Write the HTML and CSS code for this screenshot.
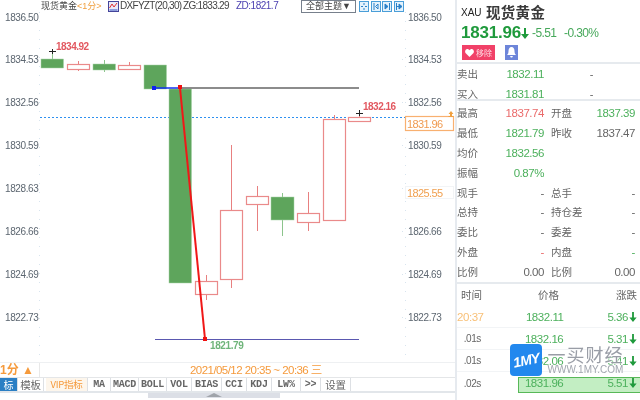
FILE: index.html
```html
<!DOCTYPE html>
<html lang="zh">
<head>
<meta charset="utf-8">
<title>现货黄金</title>
<link rel="stylesheet" href="styles.css">
</head>
<body>
<div class="app">
  <div class="main">
    <div class="topbar">
      <span class="t-name">现货黄金</span>
      <span class="t-period">&lt;1分&gt;</span>
      <svg class="t-icon" width="11" height="11" viewBox="0 0 11 11"><rect x=".5" y=".5" width="10" height="10" fill="#e8e8f8" stroke="#44449a"/><path d="M1.5 7l2.5-4 2 3 3-4" fill="none" stroke="#e03030"/><path d="M1.5 9h8" stroke="#3050c0"/></svg>
      <span class="t-formula">DXFYZT(20,30)</span>
      <span class="t-zg">ZG:1833.29</span>
      <span class="t-zd">ZD:1821.7</span>
      <span class="t-theme">全部主题▼</span>
      <span class="t-tools">
        <svg width="10" height="11" viewBox="0 0 10 11"><rect x=".5" y=".5" width="9" height="10" fill="#e4f2fc" stroke="#4a9ed8"/><path d="M5 2v2M5 7v2M2 5.500h2M6 5.500h2" stroke="#2a80c8"/></svg>
        <svg width="10" height="11" viewBox="0 0 10 11"><rect x=".5" y=".5" width="9" height="10" fill="#e4f2fc" stroke="#4a9ed8"/><path d="M3 2v7M7 3L4.500 5.500 7 8z" fill="none" stroke="#2a80c8"/></svg>
        <svg width="10" height="11" viewBox="0 0 10 11"><rect x=".5" y=".5" width="9" height="10" fill="#e4f2fc" stroke="#4a9ed8"/><path d="M3 3l3 2.500-3 2.500zM7.500 2v7" fill="#2a80c8" stroke="#2a80c8"/></svg>
        <svg width="10" height="11" viewBox="0 0 10 11"><rect x=".5" y=".5" width="9" height="10" fill="#e4f2fc" stroke="#4a9ed8"/><path d="M2 5.500h3M5 3l3 2.500-3 2.500zM2.500 2v7" fill="#2a80c8" stroke="#2a80c8"/></svg>
      </span>
    </div>
    <svg class="chart" width="455" height="350" viewBox="0 12 455 350">
      <g class="grid">
        <path d="M39.500 12V362M405.500 12V362"/>
        <path d="M36 59.500h4M36 102.500h4M36 145.500h4M36 188.500h4M36 231.500h4M36 274.500h4M36 317.500h4M402 59.500h4M402 102.500h4M402 145.500h4M402 188.500h4M402 231.500h4M402 274.500h4M402 317.500h4"/>
      </g>
      <g class="axis">
        <text x="5" y="21">1836.50</text><text x="5" y="63">1834.53</text><text x="5" y="106">1832.56</text><text x="5" y="149">1830.59</text><text x="5" y="192">1828.63</text><text x="5" y="235">1826.66</text><text x="5" y="278">1824.69</text><text x="5" y="321">1822.73</text>
        <text x="408" y="21">1836.50</text><text x="408" y="63">1834.53</text><text x="408" y="106">1832.56</text><text x="408" y="149">1830.59</text><text x="408" y="235">1826.66</text><text x="408" y="278">1824.69</text><text x="408" y="321">1822.73</text>
      </g>
      <path class="last-line" d="M40 117.500H405"/>
      <g class="up">
        <path d="M78.500 61v3M78.500 69v2M129.500 62v3M206.500 275v6M206.500 294v6M231.500 145v65M231.500 279v9M257.500 186v10M257.500 204v27M308.500 192v21M308.500 222v9M334.500 115v4M359.500 113v4"/>
        <rect x="67.500" y="64.500" width="22" height="5"/>
        <rect x="118.500" y="65.500" width="22" height="4"/>
        <rect x="195.500" y="281.500" width="22" height="13"/>
        <rect x="220.500" y="210.500" width="22" height="69"/>
        <rect x="246.500" y="196.500" width="22" height="8"/>
        <rect x="297.500" y="213.500" width="22" height="9"/>
        <rect x="323.500" y="119.500" width="22" height="101"/>
        <rect x="348.500" y="117.500" width="22" height="4"/>
      </g>
      <g class="down">
        <path d="M52.500 51v8M104.500 60v4M104.500 70v2M282.500 193v4M282.500 220v16"/>
        <rect x="41" y="59" width="22.500" height="9"/>
        <rect x="93" y="64" width="22.500" height="6"/>
        <rect x="144" y="65" width="22.500" height="24"/>
        <rect x="169" y="89" width="22.500" height="194"/>
        <rect x="271" y="197" width="23" height="23"/>
      </g>
      <path class="cross" d="M49 51.500h7M52.500 49v5M356 113.500h7M359.500 110v6"/>
      <path class="black-line" d="M180 88H359"/>
      <path class="blue-line" d="M154 88H180"/>
      <path class="bottom-line" d="M155 339.500H359"/>
      <path class="red-line" d="M180 88L205 339"/>
      <rect class="blue-dot" x="152" y="86" width="4" height="4"/>
      <rect class="red-dot" x="178" y="85" width="4" height="4"/>
      <rect class="red-dot" x="203" y="337" width="4" height="4"/>
      <text class="hi-label" x="56" y="50">1834.92</text>
      <text class="hi-label" x="363" y="110">1832.16</text>
      <text class="lo-label" x="210" y="349">1821.79</text>
      <rect class="price-box" x="405.500" y="116.500" width="48" height="14"/>
      <text class="price-text" x="407" y="128">1831.96</text>
      <path class="marker" d="M451 111l2.500 3h-1.500v2h1.500v1h-5v-1h1.500v-2h-1.500z"/>
      <rect class="cursor-box" x="405.500" y="186.500" width="48" height="12"/>
      <text class="cursor-text" x="407" y="197">1825.55</text>
    </svg>
    <div class="datebar">
      <span class="period">1分 ▲</span>
      <span class="datetext">2021/05/12 20:35 ~ 20:36 三</span>
    </div>
    <div class="tabs">
      <span class="tab tab-active">标</span>
      <span class="tab tab-cn tab-w26">模板</span>
      <span class="tab tab-vip">VIP指标</span>
      <span class="tab tab-w23">MA</span>
      <span class="tab tab-w28">MACD</span>
      <span class="tab tab-w28">BOLL</span>
      <span class="tab tab-w25">VOL</span>
      <span class="tab tab-w30">BIAS</span>
      <span class="tab tab-w25">CCI</span>
      <span class="tab tab-w25">KDJ</span>
      <span class="tab tab-w29">LW%</span>
      <span class="tab tab-w20">&gt;&gt;</span>
      <span class="tab tab-cn tab-w30">设置</span>
    </div>
    <div class="scroll"><span class="scroll-thumb"><span class="scroll-arrow"></span></span></div>
  </div>

  <aside class="side">
    <div class="quote">
      <div class="q-title"><span class="q-code">XAU</span><span class="q-name">现货黄金</span></div>
      <div class="q-price">
        <span class="q-last">1831.96</span>
        <svg class="q-arrow" width="8" height="11" viewBox="0 0 8 11"><path d="M3 0h2v6h3L4 11 0 6h3z"/></svg>
        <span class="q-chg">-5.51</span>
        <span class="q-pct">-0.30%</span>
      </div>
      <div class="q-actions">
        <span class="btn-remove"><svg width="9" height="8" viewBox="0 0 9 8"><path d="M4.500 8L.5 4C-.5 2.500.5 0 2.300 0c1 0 1.700.6 2.200 1.300C5 .6 5.700 0 6.700 0 8.500 0 9.500 2.500 8.500 4z" fill="#fff"/></svg>移除</span>
        <span class="btn-bell"><svg width="9" height="11" viewBox="0 0 9 11"><path d="M4.500 0C6.500 0 7.500 2 7.500 4c0 2 .5 3 1.500 4H0c1-1 1.500-2 1.500-4 0-2 1-4 3-4zM3.200 9h2.600c0 1-.6 1.500-1.300 1.500S3.200 10 3.200 9z" fill="#fff"/></svg></span>
      </div>
    </div>
    <div class="block block-top">
      <div class="row"><span class="lbl">卖出</span><span class="val green">1832.11</span><span class="dash">-</span></div>
      <div class="row"><span class="lbl">买入</span><span class="val green">1831.81</span><span class="dash">-</span></div>
    </div>
    <div class="block">
      <div class="row"><span class="lbl">最高</span><span class="val red">1837.74</span><span class="lbl lbl2">开盘</span><span class="val2 green">1837.39</span></div>
      <div class="row"><span class="lbl">最低</span><span class="val green">1821.79</span><span class="lbl lbl2">昨收</span><span class="val2">1837.47</span></div>
      <div class="row"><span class="lbl">均价</span><span class="val green">1832.56</span></div>
      <div class="row"><span class="lbl">振幅</span><span class="val green">0.87%</span></div>
      <div class="row"><span class="lbl">现手</span><span class="val">-</span><span class="lbl lbl2">总手</span><span class="val2">-</span></div>
      <div class="row"><span class="lbl">总持</span><span class="val">-</span><span class="lbl lbl2">持仓差</span><span class="val2">-</span></div>
      <div class="row"><span class="lbl">委比</span><span class="val">-</span><span class="lbl lbl2">委差</span><span class="val2">-</span></div>
      <div class="row"><span class="lbl">外盘</span><span class="val red">-</span><span class="lbl lbl2">内盘</span><span class="val2 green">-</span></div>
      <div class="row"><span class="lbl">比例</span><span class="val">0.00</span><span class="lbl lbl2">比例</span><span class="val2">0.00</span></div>
    </div>
    <div class="ticks">
      <div class="tick tick-head"><span class="c-time">时间</span><span class="c-price">价格</span><span class="c-chg">涨跌</span></div>
      <div class="tick"><span class="c-time orange">20:37</span><span class="c-price green">1832.11</span><span class="c-chg green">5.36<svg class="arrow" width="8" height="10" viewBox="0 0 8 11"><path d="M3 0h2v6h3L4 11 0 6h3z"/></svg></span></div>
      <div class="tick"><span class="c-time small">.01s</span><span class="c-price green">1832.16</span><span class="c-chg green">5.31<svg class="arrow" width="8" height="10" viewBox="0 0 8 11"><path d="M3 0h2v6h3L4 11 0 6h3z"/></svg></span></div>
      <div class="tick"><span class="c-time small">.01s</span><span class="c-price green">1832.06</span><span class="c-chg green">5.41<svg class="arrow" width="8" height="10" viewBox="0 0 8 11"><path d="M3 0h2v6h3L4 11 0 6h3z"/></svg></span></div>
      <div class="tick tick-last"><span class="c-time small">.02s</span><span class="c-price green">1831.96</span><span class="c-chg green">5.51<svg class="arrow" width="8" height="10" viewBox="0 0 8 11"><path d="M3 0h2v6h3L4 11 0 6h3z"/></svg></span></div>
    </div>
  </aside>

  <div class="watermark">
    <div class="wm-logo"><span class="wm-1my">1MY</span></div>
    <div class="wm-text">
      <span class="wm-cn">一买财经</span>
      <span class="wm-url">WWW.1MY.COM</span>
    </div>
  </div>
</div>
</body>
</html>
```

FILE: styles.css
```css
* { box-sizing: border-box; }
html, body { margin: 0; padding: 0; background: #fff; }
body { width: 640px; height: 400px; overflow: hidden; font-family: "Liberation Sans", "Noto Sans CJK SC", sans-serif; color: #555; }
.app { position: relative; display: flex; width: 640px; height: 400px; filter: blur(.35px); }

/* main column */
.main { width: 457px; flex: none; border-right: 2px solid #e6eaef; }
.topbar { display: flex; align-items: center; height: 12px; font-size: 10px; line-height: 12px; color: #444; white-space: nowrap; letter-spacing: -.7px; }
.t-name { margin-left: 41px; width: 36px; font-size: 9px; letter-spacing: 0; }
.t-period { width: 31px; color: #f0a040; font-size: 9px; letter-spacing: 0; }
.t-icon { flex: none; margin-right: 1px; }
.t-formula { width: 63px; }
.t-zg { width: 53px; }
.t-zd { width: 65px; color: #4a3fb0; letter-spacing: -.5px; }
.t-theme { width: 55px; height: 13px; border: 1px solid #77808c; text-align: center; font-size: 9px; line-height: 11px; letter-spacing: 0; }
.t-tools { display: flex; gap: 1.500px; margin-left: 3px; }
.chart { display: block; }
.grid path { fill: none; stroke: #d8e4ee; stroke-width: 1; stroke-dasharray: 1 8; }
.axis text { font-size: 10px; letter-spacing: -.4px; fill: #5c6670; }
.last-line { stroke: #2e90f0; stroke-width: 1.200; stroke-dasharray: 2 2; fill: none; }
.up path { stroke: #e88080; fill: none; }
.up rect { fill: #fff; stroke: #ea8a8a; stroke-width: 1.200; }
.down path { stroke: #8cc48c; fill: none; }
.down rect { fill: #5ea55c; stroke: #a8d4a8; stroke-width: .5; }
.cross { stroke: #222; fill: none; }
.black-line { stroke: #666; stroke-width: 1.500; }
.blue-line { stroke: #1030f0; stroke-width: 1.500; }
.bottom-line { stroke: #5a58b0; stroke-width: 1; }
.red-line { stroke: #f01818; stroke-width: 2; fill: none; }
.blue-dot { fill: #1020f0; }
.red-dot { fill: #f01010; }
.hi-label { font-size: 10px; font-weight: 700; letter-spacing: -.5px; fill: #e25860; }
.lo-label { font-size: 10px; font-weight: 700; letter-spacing: -.4px; fill: #6fb47a; }
.price-box { fill: #fff; stroke: #f8b070; stroke-width: 1.200; }
.price-text { font-size: 11px; letter-spacing: -.6px; fill: #f09a50; }
.marker { fill: #f0a040; }
.cursor-box { fill: #fff; stroke: #f2f4f6; }
.cursor-text { font-size: 11px; letter-spacing: -.6px; fill: #f0a050; }

/* date bar and tabs */
.datebar { display: flex; align-items: center; height: 16px; border-top: 1px solid #eef0f2; border-bottom: 1px solid #e4e6e8; font-size: 11.500px; color: #f59a3c; }
.period { width: 40px; height: 100%; border-right: 1px solid #e8e8e8; font-size: 12px; font-weight: 700; line-height: 15px; white-space: nowrap; }
.datetext { margin: 0 0 3px 150px; letter-spacing: -.55px; white-space: nowrap; }
.tabs { display: flex; height: 15px; border-bottom: 2px solid #e2e6ea; background: #fff; font-family: "Liberation Mono", monospace; font-size: 10px; font-weight: 700; line-height: 13px; color: #666; }
.tab { display: block; border-right: 1px solid #dde0e4; text-align: center; white-space: nowrap; letter-spacing: -.2px; }
.tab-active { width: 18px; background: #2b7fc4; color: #fff; font-family: "Noto Sans CJK SC", sans-serif; font-size: 10px; font-weight: 400; }
.tab-cn { font-family: "Noto Sans CJK SC", sans-serif; font-size: 10.500px; font-weight: 400; }
.tab-vip { width: 42px; margin-left: 2px; background: #fdf6ec; color: #f59a3c; font-family: "Noto Sans CJK SC", sans-serif; font-size: 9.500px; font-weight: 400; letter-spacing: -.3px; }
.tab-w20 { width: 20px; }
.tab-w23 { width: 23px; }
.tab-w25 { width: 25px; }
.tab-w26 { width: 26px; }
.tab-w28 { width: 28px; }
.tab-w29 { width: 29px; }
.tab-w30 { width: 30px; }
.scroll { height: 5px; padding-left: 148px; background: #fff; }
.scroll-thumb { display: flex; justify-content: center; width: 132px; height: 5px; background: #dcdfe6; }
.scroll-arrow { width: 0; height: 0; border: solid transparent; border-width: 0 8px 4px; border-bottom-color: #a0a4aa; }

/* sidebar */
.side { width: 183px; flex: none; font-size: 11px; color: #666; }
.quote { height: 64px; border-bottom: 2px solid #e6eaee; padding-left: 4px; }
.q-title { display: flex; align-items: center; height: 23px; padding-top: 1px; }
.q-code { width: 25px; font-size: 10px; color: #222; }
.q-name { font-family: "Noto Sans CJK SC", sans-serif; font-size: 14.500px; font-weight: 700; line-height: 20px; color: #3a3a3a; letter-spacing: .3px; }
.q-price { display: flex; align-items: center; height: 20px; color: #1f9a3c; }
.q-last { width: 60px; font-size: 17px; font-weight: 700; letter-spacing: -.2px; }
.q-arrow { fill: #1f9a3c; margin-right: 3px; }
.q-chg { width: 32px; font-size: 12px; letter-spacing: -.6px; color: #46a85a; }
.q-pct { font-size: 12px; letter-spacing: -.6px; color: #46a85a; }
.q-actions { display: flex; gap: 10px; margin: 2px 0 0 1px; }
.btn-remove { display: flex; align-items: center; justify-content: center; gap: 2px; width: 33px; height: 15px; background: #f14168; color: #ffd9e2; font-size: 8px; }
.btn-bell { display: flex; align-items: center; justify-content: center; width: 13px; height: 15px; background: #6d85d9; }
.block { display: flex; flex-direction: column; gap: 5.900px; padding-top: 5px; }
.block-top { height: 37px; padding-top: 3px; border-bottom: 2px solid #e6eaee; }
.row { display: flex; height: 14px; line-height: 14px; letter-spacing: -.45px; }
.lbl { width: 29px; color: #666; font-size: 10.500px; letter-spacing: 0; white-space: nowrap; }
.lbl2 { width: 38px; margin-left: 7px; }
.val { width: 58px; text-align: right; font-size: 11.500px; }
.val2 { flex: 1; padding-right: 5px; text-align: right; font-size: 11.500px; }
.dash { width: 49px; text-align: right; }
.green { color: #4cb05c; }
.red { color: #ea6a6a; }
.orange { color: #f8c078; }

/* tick table */
.ticks { margin-top: 3px; border-top: 2px solid #e6eaee; }
.tick { position: relative; display: flex; align-items: center; height: 22px; font-size: 11.500px; letter-spacing: -.45px; border-bottom: 1px solid #f2f4f6; }
.tick-head { height: 20px; font-size: 10.500px; letter-spacing: 0; color: #666; border-bottom: 0; }
.tick-head + .tick { height: 24px; padding-top: 3px; }
.tick-last { border-bottom: 0; }
.tick-last::before { content: ""; position: absolute; left: 61px; right: 0; top: 5px; height: 14px; background: #c3eec3; border: 1px solid #58b858; border-right: 0; }
.c-time { position: relative; width: 25px; text-align: right; }
.c-time.small { font-size: 10px; color: #666; }
.c-price { position: relative; width: 133px; text-align: center; white-space: nowrap; }
.tick-head .c-price { color: #666; }
.c-chg { position: relative; flex: 1; padding-right: 3px; text-align: right; white-space: nowrap; }
.arrow { margin-left: 1px; fill: #1f9a3c; vertical-align: -1px; }

/* watermark */
.watermark { position: absolute; left: 510px; top: 344px; display: flex; gap: 6px; }
.wm-logo { display: flex; align-items: center; justify-content: center; width: 32px; height: 32px; border-radius: 4px; background: #2288ee; }
.wm-1my { font-size: 14px; font-weight: 700; font-style: italic; letter-spacing: -.8px; color: #fff; transform: rotate(-12deg); }
.wm-text { display: flex; flex-direction: column; align-items: center; width: 75px; }
.wm-cn { font-family: "Noto Sans CJK SC", sans-serif; font-size: 18px; line-height: 20px; letter-spacing: 1px; color: rgba(135, 140, 150, .85); text-shadow: 0 0 2px #fff, 0 0 2px #fff; white-space: nowrap; }
.wm-url { margin-top: 1px; font-size: 10px; line-height: 10px; color: rgba(150, 155, 165, .9); text-shadow: 0 0 2px #fff, 0 0 2px #fff; white-space: nowrap; }
```
